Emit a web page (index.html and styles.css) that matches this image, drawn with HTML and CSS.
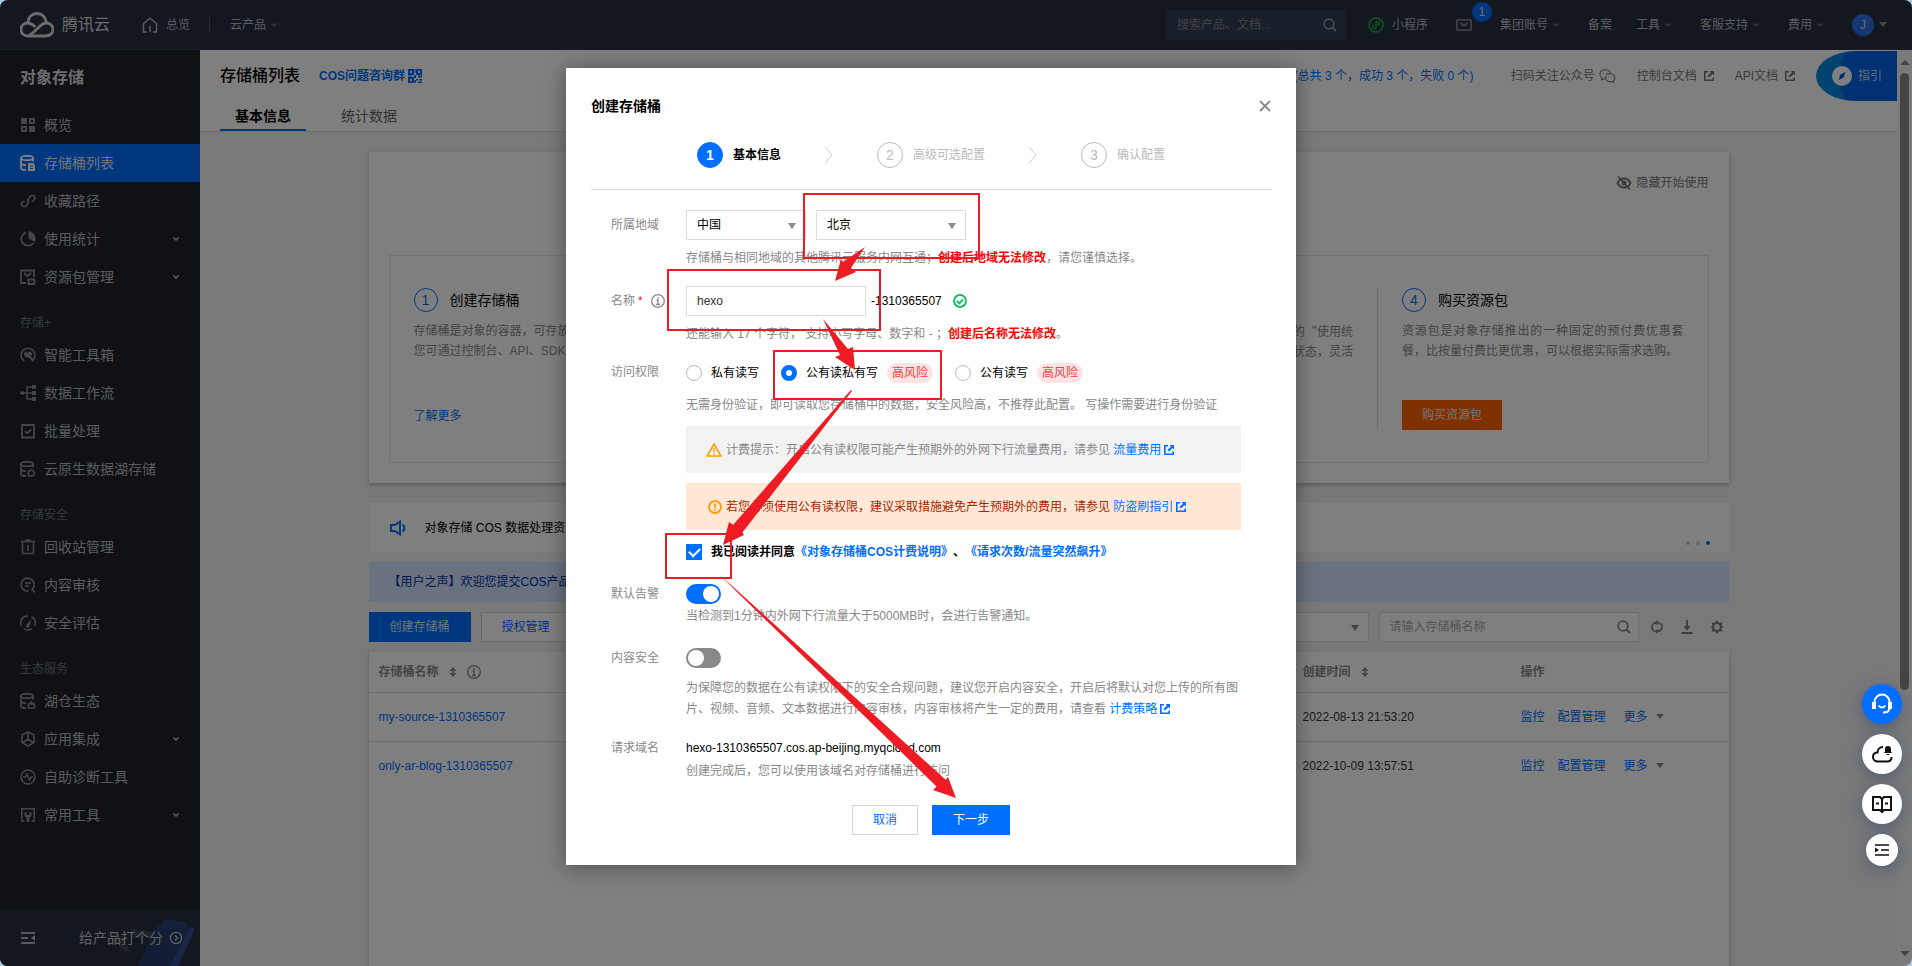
FILE: index.html
```html
<!DOCTYPE html>
<html lang="zh-CN">
<head>
<meta charset="utf-8">
<title>存储桶列表 - 对象存储</title>
<link rel="stylesheet" href="styles.css">
</head>
<body>
<svg width="0" height="0" class="defs" aria-hidden="true">
  <symbol id="chev" viewBox="0 0 8 8"><path d="M1.500 2.500l2.500 2.500 2.500-2.500" fill="none" stroke="currentColor" stroke-width="1.400"/></symbol>
  <symbol id="ext" viewBox="0 0 10 10"><path d="M4 .8H.8v8.400h8.400V6.500" fill="none" stroke="currentColor" stroke-width="1.600"/><path d="M5.500 0H10v4.500L8.500 3 5 6.500 3.500 5 7 1.500z" fill="currentColor"/></symbol>
  <symbol id="search" viewBox="0 0 14 14"><circle cx="6" cy="6" r="4.800" fill="none" stroke="currentColor" stroke-width="1.800"/><path d="M9.500 9.500l3.500 3.500" stroke="currentColor" stroke-width="2"/></symbol>
  <symbol id="info" viewBox="0 0 14 14"><circle cx="7" cy="7" r="6.300" fill="none" stroke="currentColor" stroke-width="1.300"/><path d="M7 3v1.600M5.500 6H7v4.500M5 10.500h4" fill="none" stroke="currentColor" stroke-width="1.400"/></symbol>
  <symbol id="sort" viewBox="0 0 8 12"><path d="M4 1l3.500 4H5v2h2.500L4 11 .5 7H3V5H.5z" fill="currentColor"/></symbol>
  <symbol id="db" viewBox="0 0 16 16"><g fill="none" stroke="currentColor" stroke-width="1.800"><ellipse cx="7" cy="3" rx="6" ry="2.200"/><path d="M1 3v10c0 1 2 2 5 2M1 8c0 1 2 2 5 2M13 3v3.500"/></g></symbol>
</svg>
<div class="app">
  <header class="top">
    <a class="logo" href="#">
      <svg width="34" height="26" viewBox="0 0 34 26"><path d="M8 24c-4 0-7-2.600-7-6.500S4 11 8 11c3 0 5 2 7.500 4M8 11C8 5 12 1.500 17 1.500S26 5 26 11c4 0 7 2.800 7 6.500S30 24 26 24H8c3-1 7-5 10-8s5-5 8-5" fill="none" stroke="currentColor" stroke-width="2.800"/></svg>
      <span>腾讯云</span>
    </a>
    <nav class="topleft">
      <a href="#" class="home"><svg width="16" height="16" viewBox="0 0 16 16"><path d="M5 15H1.500V6.500L8 1.200l6.500 5.300V15H11M8 9v6" fill="none" stroke="currentColor" stroke-width="1.500"/></svg>总览</a>
      <a href="#" class="products">云产品<svg width="8" height="8"><use href="#chev"/></svg></a>
    </nav>
    <div class="topright">
      <div class="navset">
        <div class="searchset">
          <label class="topsearch"><input type="text" placeholder="搜索产品、文档..." aria-label="搜索"><svg width="14" height="14"><use href="#search"/></svg></label>
          <a href="#" class="mini"><svg width="16" height="16" viewBox="0 0 16 16"><circle cx="8" cy="8" r="7" fill="none" stroke="#1aad40" stroke-width="1.600"/><path d="M9.500 8.500C12 8 11.500 4.500 9.500 4.500 8 4.500 8 5.500 8 7v2.500c0 1.500-.8 2-1.700 2-2 0-2.300-3-.3-3.700" fill="none" stroke="#1aad40" stroke-width="1.400"/></svg>小程序</a>
        </div>
        <a href="#" class="mail" aria-label="消息 1"><svg width="16" height="12" viewBox="0 0 16 12"><path d="M1 1h14v10H1zM4 3.500l4 3.500 4-3.500" fill="none" stroke="currentColor" stroke-width="1.600"/></svg><span class="badge">1</span></a>
        <a href="#">集团账号<svg width="8" height="8"><use href="#chev"/></svg></a>
        <a href="#">备案</a>
      </div>
      <div class="navset">
        <a href="#">工具<svg width="8" height="8"><use href="#chev"/></svg></a>
        <a href="#">客服支持<svg width="8" height="8"><use href="#chev"/></svg></a>
        <a href="#">费用<svg width="8" height="8"><use href="#chev"/></svg></a>
        <a href="#"><span class="avatar">J</span><i class="tri"></i></a>
      </div>
    </div>
  </header>
  <div class="body">
    <aside class="side">
      <h1>对象存储</h1>
      <nav class="menu">
        <a href="#"><svg width="16" height="16" viewBox="0 0 16 16"><path d="M1 1h6v6H1zM9 9h6v6H9z" fill="currentColor"/><path d="M10 2h4v4h-4zM2 10h4v4H2z" fill="none" stroke="currentColor" stroke-width="2"/></svg>概览</a>
        <a href="#" class="on"><svg width="16" height="16" viewBox="0 0 16 16"><use href="#db"/><path d="M8 8h5l2 2v6H8z" fill="currentColor"/><path d="M10 11h3M10 13.500h3" stroke="#006eff"/></svg>存储桶列表</a>
        <a href="#"><svg width="16" height="16" viewBox="0 0 16 16"><path d="M4.500 8.500H3L1 11l1.500 2.500H6l2-3V6.500l3-4h3L15.200 5 13 8h-1.500" fill="none" stroke="currentColor" stroke-width="1.700"/></svg>收藏路径</a>
        <a href="#"><svg width="16" height="16" viewBox="0 0 16 16"><path d="M6 1.400A6.800 6.800 0 1 0 13.500 12" fill="none" stroke="currentColor" stroke-width="1.700"/><path d="M8.500 0A8 8 0 0 1 15 11L8.500 7.500z" fill="currentColor"/></svg>使用统计<svg class="end" width="8" height="8"><use href="#chev"/></svg></a>
        <a href="#"><svg width="16" height="16" viewBox="0 0 16 16"><path d="M6 14H1V1.500h13V8M4 4l3.500 3L11 4" fill="none" stroke="currentColor" stroke-width="1.800"/><path d="M8.500 10.500h6V15h-6z" fill="none" stroke="currentColor" stroke-width="1.800"/></svg>资源包管理<svg class="end" width="8" height="8"><use href="#chev"/></svg></a>
        <h2>存储+</h2>
        <a href="#"><svg width="16" height="16" viewBox="0 0 16 16"><path d="M4 14a7 7 0 1 1 8 0" fill="none" stroke="currentColor" stroke-width="1.600"/><path d="M5 4l2.500 2L9 4.500c2 0 3.500 1.500 3 3.500l-1.500 1L14 13l-1.500 1.500-4-4c-3 .5-5-2-4.500-4z" fill="currentColor"/></svg>智能工具箱</a>
        <a href="#"><svg width="16" height="16" viewBox="0 0 16 16"><path d="M0 8h13M12 2H7v12h5" fill="none" stroke="currentColor" stroke-width="1.500"/><path d="M12 0h4v4h-4zM12 6h4v4h-4zM12 12h4v4h-4zM1 6.500h3v3H1z" fill="currentColor"/></svg>数据工作流</a>
        <a href="#"><svg width="16" height="16" viewBox="0 0 16 16"><path d="M2 2h12v12.500H2zM5 8l2.300 2.300L11.300 6.500" fill="none" stroke="currentColor" stroke-width="1.800"/></svg>批量处理</a>
        <a href="#"><svg width="16" height="16" viewBox="0 0 16 16"><use href="#db"/><path d="M9 9.500h4l1.500 2.500-1.500 3H9L8 12z" fill="none" stroke="currentColor" stroke-width="1.600"/></svg>云原生数据湖存储</a>
        <h2>存储安全</h2>
        <a href="#"><svg width="16" height="16" viewBox="0 0 16 16"><path d="M1 2.500h14M5.500 1h5M2.500 3v11.500h11V3M8 6v6" fill="none" stroke="currentColor" stroke-width="1.600"/></svg>回收站管理</a>
        <a href="#"><svg width="16" height="16" viewBox="0 0 16 16"><path d="M8.500 14A6.500 6.500 0 1 1 14 8c0 2-1 4-2 4.500l3 3M5 6h6M5 9h4" fill="none" stroke="currentColor" stroke-width="1.600"/></svg>内容审核</a>
        <a href="#"><svg width="16" height="16" viewBox="0 0 16 16"><path d="M1 10.500A7 7 0 0 1 8 1M11.500 1.800A7 7 0 0 1 15 10.500M4 13.500c2 2 6 2 8 0" fill="none" stroke="currentColor" stroke-width="1.700"/><path d="M11.500 4L9.500 11a1.800 1.800 0 1 1-3-1.500z" fill="currentColor"/></svg>安全评估</a>
        <h2>生态服务</h2>
        <a href="#"><svg width="16" height="16" viewBox="0 0 16 16"><use href="#db"/><path d="M8.500 11h6v4h-6zM9.500 11l2-2 2 2" fill="none" stroke="currentColor" stroke-width="1.600"/></svg>湖仓生态</a>
        <a href="#"><svg width="16" height="16" viewBox="0 0 16 16"><path d="M8 1l6 3v7.500L8 15l-6-3.500V4zM8 2v6M8 8l-5 3.500M8 8l5 3.500" fill="none" stroke="currentColor" stroke-width="1.600"/></svg>应用集成<svg class="end" width="8" height="8"><use href="#chev"/></svg></a>
        <a href="#"><svg width="16" height="16" viewBox="0 0 16 16"><circle cx="8" cy="8" r="7" fill="none" stroke="currentColor" stroke-width="1.600"/><path d="M3 8h2.500L7 5l2.500 6L11 8h2" fill="none" stroke="currentColor" stroke-width="1.500"/></svg>自助诊断工具</a>
        <a href="#"><svg width="16" height="16" viewBox="0 0 16 16"><path d="M4.500 14.200H1.800V1.800h12.400v12.400h-2.700" fill="none" stroke="currentColor" stroke-width="1.600"/><path d="M4.500 5v4l2 1.500V15h3v-4.500l2-1.500V5h-2v3h-3V5z" fill="currentColor"/></svg>常用工具<svg class="end" width="8" height="8"><use href="#chev"/></svg></a>
      </nav>
      <div class="sidefoot">
        <svg class="art" width="110" height="56" viewBox="0 0 110 56"><path d="M16 20q6 2 5 8l14 14 6 1-6-12-8-8zM38 22l4-3 26 3v4l-22 2z" fill="#3c4250"/><path d="M66 14l34 4-20 38H48z" fill="#263a68"/><path d="M100 17l5 2-17 37h-8z" fill="#304e90"/><path d="M74 9l21 3 4 7-27 1z" fill="#2b4274"/></svg>
        <button class="fold" aria-label="收起菜单"><svg width="14" height="12" viewBox="0 0 14 12"><path d="M0 1h14M0 6h7M0 11h14" stroke="currentColor" stroke-width="2"/><path d="M14 3v6l-4-3z" fill="currentColor"/></svg></button>
        <a href="#">给产品打个分<svg width="14" height="14" viewBox="0 0 14 14"><circle cx="7" cy="7" r="5.600" fill="none" stroke="currentColor" stroke-width="1.300"/><path d="M6 4.500L8.500 7 6 9.500" fill="none" stroke="currentColor" stroke-width="1.300"/></svg></a>
      </div>
    </aside>
    <main class="main">
      <div class="pagehead">
        <div class="titlerow">
          <h2>存储桶列表</h2>
          <a href="#" class="qr">COS问题咨询群<svg width="14" height="14" viewBox="0 0 14 14"><path d="M1 1h4v4H1zM9 1h4v4H9zM1 9h4v4H1z" fill="none" stroke="currentColor" stroke-width="2"/><path d="M6.500 0h1v4h-1zM6 6h2v3H6zM0 6.500h4v1H0zM10 6.500h4v2h-4zM8 10h2v1.500H8zM6.500 11h1.500v3H6.500zM11 10h3v1.500h-3zM10 12.500h4V14h-4z" fill="currentColor"/></svg></a>
          <div class="headlinks">
            <a href="#" class="sum">(总共 3 个，成功 3 个，失败 0 个)</a>
            <a href="#">扫码关注公众号<svg width="17" height="14" viewBox="0 0 17 14"><g fill="none" stroke="currentColor" stroke-width="1.100"><path d="M6 9.500l-3.500 1.300.5-2C-1 5.500 1.500.8 6 .8S11.500 3.500 11 4.800"/><path d="M11.200 4.800c-3 0-4.700 2-4.700 4s2 4 4.700 4l1.300-.3 2 1v-1.700c3-2.500 1-7-3.300-7z"/></g><path d="M4 4h1v1H4zM7.500 4h1v1h-1zM9 7.500h1v1H9zM12.500 7.500h1v1h-1z" fill="currentColor"/></svg></a>
            <a href="#" class="doc">控制台文档<svg width="10" height="10"><use href="#ext"/></svg></a>
            <a href="#" class="doc">API文档<svg width="10" height="10"><use href="#ext"/></svg></a>
          </div>
        </div>
        <button class="guide"><svg width="20" height="20" viewBox="0 0 20 20"><circle cx="10" cy="10" r="10" fill="#fff"/><path d="M13.500 6l-2 5.500L6.500 14l2-5.500z" fill="#0052d9"/></svg>指引</button>
        <nav class="tabs"><a href="#" class="on">基本信息</a><a href="#">统计数据</a></nav>
      </div>
      <div class="content">
        <section class="card start">
          <a href="#" class="hide"><svg width="16" height="16" viewBox="0 0 16 16"><path d="M1.500 8C3 5 5.500 3.500 8 3.500S13 5 14.500 8C13 11 10.500 12.500 8 12.500S3 11 1.500 8z" fill="none" stroke="currentColor" stroke-width="2"/><circle cx="8" cy="8" r="2.400" fill="currentColor"/><path d="M2 1.500l12 13" stroke="currentColor" stroke-width="1.700"/></svg>隐藏开始使用</a>
          <div class="steps4">
            <div class="s4"><h3><b>1</b>创建存储桶</h3><p>存储桶是对象的容器，可存放任意数量的对象，<br>您可通过控制台、API、SDK 等方式创建存储桶。</p><a href="#">了解更多</a></div>
            <div class="s4"></div>
            <div class="s4 third"><p>您可以通过控制台的“使用统<br>计”查看数据与运行状态，灵活</p></div>
            <div class="s4"><h3><b>4</b>购买资源包</h3><p>资源包是对象存储推出的一种固定的预付费优惠套餐，比按量付费比更优惠，可以根据实际需求选购。</p><button class="buy">购买资源包</button></div>
          </div>
        </section>
        <section class="notice">
          <svg width="17" height="16" viewBox="0 0 17 16"><path d="M1 5h4l5-3.500v13L5 11H1z" fill="none" stroke="#006eff" stroke-width="1.900"/><path d="M12.500 4.500c2.500 1.500 2.500 5.500 0 7" fill="none" stroke="#006eff" stroke-width="2"/></svg>
          <span>对象存储 COS 数据处理资源包上线</span>
          <span class="dots"><i></i><i></i><i class="on"></i></span>
        </section>
        <section class="voice">【用户之声】欢迎您提交COS产品建议</section>
        <div class="bar">
          <button class="btn primary">创建存储桶</button>
          <button class="btn">授权管理</button>
          <span class="pick far"><select aria-label="筛选"><option></option></select></span>
          <label class="find"><input type="text" placeholder="请输入存储桶名称" aria-label="存储桶名称"><svg width="14" height="14"><use href="#search"/></svg></label>
          <div class="tools">
            <button aria-label="刷新"><svg width="14" height="14" viewBox="0 0 14 14"><path d="M4.600 11.400C1.500 9.800 1 5.500 3.600 3.600 4.500 2.900 5.500 2.600 7 2.600M9.400 2.600C12.500 4.200 13 8.500 10.400 10.400 9.500 11.100 8.500 11.400 7 11.400" fill="none" stroke="currentColor" stroke-width="1.600"/><path d="M6.500 0v5.200l3-2.600zM7.500 8.800V14l-3-2.600z" fill="currentColor"/></svg></button>
            <button aria-label="下载"><svg width="14" height="14" viewBox="0 0 14 14"><path d="M7 0v8M1.500 13h11" stroke="currentColor" stroke-width="1.900"/><path d="M3.500 6h7L7 10.500z" fill="currentColor"/></svg></button>
            <button aria-label="设置"><svg width="14" height="14" viewBox="0 0 14 14"><path d="M7 0l1.900 2.800 3.600-.3-1.200 3.300L13.500 7l-2.200 1.200 1.200 3.300-3.600-.3L7 14l-1.900-2.800-3.600.3 1.200-3.300L.5 7l2.200-1.200-1.200-3.300 3.600.3z" fill="currentColor"/><circle cx="7" cy="7" r="2.900" fill="#f2f2f2"/></svg></button>
          </div>
        </div>
        <div class="card tablecard">
          <table>
            <colgroup><col class="c1"><col class="c2"><col class="c3"></colgroup>
            <thead><tr><th><span>存储桶名称<svg width="8" height="12"><use href="#sort"/></svg><svg width="14" height="14"><use href="#info"/></svg></span></th><th><span>创建时间<svg width="8" height="12"><use href="#sort"/></svg></span></th><th>操作</th></tr></thead>
            <tbody>
              <tr><td><a href="#">my-source-1310365507</a></td><td>2022-08-13 21:53:20</td><td><div class="ops"><a href="#">监控</a><a href="#">配置管理</a><a href="#" class="more">更多<i class="tri"></i></a></div></td></tr>
              <tr><td><a href="#">only-ar-blog-1310365507</a></td><td>2022-10-09 13:57:51</td><td><div class="ops"><a href="#">监控</a><a href="#">配置管理</a><a href="#" class="more">更多<i class="tri"></i></a></div></td></tr>
            </tbody>
          </table>
        </div>
      </div>
    </main>
    <div class="scroll"><i class="up"></i><i class="thumb"></i><i class="down"></i></div>
  </div>

  <div class="mask">
    <form class="modal" role="dialog" aria-label="创建存储桶">
      <div class="mtitle"><h2>创建存储桶</h2><button type="button" aria-label="关闭"><svg width="12" height="12" viewBox="0 0 12 12"><path d="M1 1l10 10M11 1L1 11" stroke="#888" stroke-width="1.800"/></svg></button></div>
      <ol class="steps">
        <li class="on"><b>1</b>基本信息</li>
        <li class="arr"><svg width="10" height="16" viewBox="0 0 10 16"><path d="M1 0l7 8-7 8" fill="none" stroke="#ccc"/></svg></li>
        <li><b>2</b>高级可选配置</li>
        <li class="arr"><svg width="10" height="16" viewBox="0 0 10 16"><path d="M1 0l7 8-7 8" fill="none" stroke="#ccc"/></svg></li>
        <li><b>3</b>确认配置</li>
      </ol>
      <div class="fields">
        <div class="row">
          <label for="area">所属地域</label>
          <div>
            <div class="line selects"><span class="pick country"><select id="area"><option>中国</option></select></span><span class="pick city"><select aria-label="城市"><option>北京</option></select></span></div>
            <p class="help">存储桶与相同地域的其他腾讯云服务内网互通；<strong>创建后地域无法修改</strong>，请您谨慎选择。</p>
          </div>
        </div>
        <div class="row">
          <label for="bname">名称<em>*</em><svg width="14" height="14"><use href="#info"/></svg></label>
          <div>
            <div class="line"><input id="bname" class="text" type="text" value="hexo"><span class="suffix">-1310365507</span><svg width="14" height="14" viewBox="0 0 14 14"><circle cx="7" cy="7" r="6" fill="none" stroke="#0abf5b" stroke-width="1.800"/><path d="M4 7l2.300 2.300L10 5.500" fill="none" stroke="#0abf5b" stroke-width="1.900"/></svg></div>
            <p class="help">还能输入 17 个字符， 支持小写字母、数字和 - ；<strong>创建后名称无法修改</strong>。</p>
          </div>
        </div>
        <div class="row short">
          <span class="lab">访问权限</span>
          <div>
            <div class="line radios">
              <label><input type="radio" name="acl"><span>私有读写</span></label>
              <label><input type="radio" name="acl" checked><span>公有读私有写</span><i class="tag">高风险</i></label>
              <label><input type="radio" name="acl"><span>公有读写</span><i class="tag">高风险</i></label>
            </div>
            <p class="help acl">无需身份验证，即可读取您存储桶中的数据，安全风险高，不推荐此配置。 写操作需要进行身份验证</p>
            <div class="alert"><svg width="16" height="14" viewBox="0 0 16 14"><path d="M8 1l7 12H1z" fill="none" stroke="#ff9d00" stroke-width="1.500"/><path d="M8 5v4M8 10v1.500" stroke="#ff9d00" stroke-width="1.500"/></svg><span>计费提示：开启公有读权限可能产生预期外的外网下行流量费用，请参见 <a href="#">流量费用<svg width="10" height="10"><use href="#ext"/></svg></a></span></div>
            <div class="alert warn"><svg width="16" height="14" viewBox="0 0 16 14"><circle cx="9" cy="7" r="6" fill="none" stroke="#ff9d00" stroke-width="1.800"/><path d="M9 3.500v4.500M9 9v1.600" stroke="#ff9d00" stroke-width="1.800"/></svg><span>若您必须使用公有读权限，建议采取措施避免产生预期外的费用，请参见 <a href="#">防盗刷指引<svg width="10" height="10"><use href="#ext"/></svg></a></span></div>
            <label class="agree"><input type="checkbox" checked><span>我已阅读并同意<a href="#">《对象存储桶COS计费说明》</a>、<a href="#">《请求次数/流量突然飙升》</a></span></label>
          </div>
        </div>
        <div class="row short">
          <label for="alarm">默认告警</label>
          <div><div class="line"><input id="alarm" class="switch" type="checkbox" checked></div>
          <p class="help tight">当检测到1分钟内外网下行流量大于5000MB时，会进行告警通知。</p></div>
        </div>
        <div class="row short">
          <label for="safe">内容安全</label>
          <div><div class="line"><input id="safe" class="switch" type="checkbox"></div>
          <p class="help para">为保障您的数据在公有读权限下的安全合规问题，建议您开启内容安全，开启后将默认对您上传的所有图片、视频、音频、文本数据进行内容审核，内容审核将产生一定的费用，请查看 <a href="#">计费策略<svg width="10" height="10"><use href="#ext"/></svg></a></p></div>
        </div>
        <div class="row short last">
          <span class="lab">请求域名</span>
          <div><div class="line">hexo-1310365507.cos.ap-beijing.myqcloud.com</div>
          <p class="help domain">创建完成后，您可以使用该域名对存储桶进行访问</p></div>
        </div>
      </div>
      <div class="actions"><button type="button" class="btn">取消</button><button type="button" class="btn primary">下一步</button></div>
      <svg class="marks" viewBox="566 68 730 797" aria-hidden="true">
        <g fill="none" stroke="#ed1c24" stroke-width="2"><path d="M804 194h175v64H804zM668 270h212v60H668zM774 351h167v48H774zM666 534h65v44h-65z"/></g>
        <g fill="#ed1c24"><path d="M835 281l6-22 2 3 22-15-14 21 5 4z"/><path d="M823 319L848 349 853 347 855 370 835 357 840 355z"/><path d="M851 390L741 530l3 5-21 10 6-23 6 4z"/><path d="M851 390l1 1L742 533l-9-8z"/><path d="M718 574l225 209 5-6 8 21-23-8 5-5z"/><path d="M719 574l228 207-10 6z"/></g>
      </svg>
    </form>
  </div>

  <div class="float">
    <button class="hot" aria-label="客服"><svg width="22" height="22" viewBox="0 0 22 22"><path d="M3.500 15V9a7.500 7.500 0 0 1 15 0v6c0 3-2 4.500-6.500 4.500" fill="none" stroke="#fff" stroke-width="2"/><path d="M1 9h4v7H1zM17 9h4v7h-4z" fill="#fff"/><path d="M7.500 12.500c2 2.500 5 2.500 7 0" fill="none" stroke="#fff" stroke-width="2"/></svg></button>
    <button aria-label="通知"><svg width="22" height="22" viewBox="0 0 22 22"><path d="M12 4C8.500 4 6.500 6.500 6.500 9.500 3.500 9.500 2 11.500 2 14s2 4.500 5 4.500h9c3 0 4.500-2 4.500-4.500" fill="none" stroke="#111" stroke-width="2"/><path d="M14 9V6a3 3 0 0 1 6 0v3l1.500 1h-9zM15.500 11h3v1h-3z" fill="#111"/></svg></button>
    <button aria-label="文档"><svg width="22" height="22" viewBox="0 0 22 22"><path d="M2 4h7l2 2 2-2h7v13h-7l-2 2-2-2H2zM11 6v12M5 10.500h3M14 10.500h3" fill="none" stroke="#111" stroke-width="2"/></svg></button>
    <button class="small" aria-label="收起"><svg width="14" height="12" viewBox="0 0 14 12"><path d="M0 1h14M6 6h8M0 11h14" stroke="#111" stroke-width="1.500"/><path d="M0 3.500v5L4 6z" fill="#111"/></svg></button>
  </div>
</div>
</body>
</html>
```
FILE: styles.css
```css
* { box-sizing: border-box; margin: 0; padding: 0; }
html { background: #a4cbe2; }
body { font: 12px/20px "Liberation Sans", "Noto Sans CJK SC", sans-serif; color: #000; text-spacing-trim: space-all; }
a { color: #006eff; text-decoration: none; }
button, input, select { font: inherit; color: inherit; border: 0; background: none; border-radius: 0; outline: 0; }
svg { flex: none; }
ol { list-style: none; }
i, em { font-style: normal; }
.defs { position: absolute; }
.app { position: relative; height: 100vh; display: flex; flex-direction: column; overflow: hidden; border-radius: 8px; background: #f2f2f2; }

.top { height: 50px; flex: none; display: flex; align-items: center; background: #262f3e; border-bottom: 1px solid #343e4e; padding: 0 25px 0 20px; color: #b4b8be; }
.top a { color: inherit; display: flex; align-items: center; white-space: nowrap; }
.top a > svg[width="8"] { margin-left: 4px; color: #6f7783; }
.top .logo { gap: 8px; font-size: 16px; color: #d5d8dc; }
.topleft { display: flex; align-items: center; margin-left: 32px; }
.top .home { gap: 8px; padding-right: 19px; border-right: 1px solid #4a5260; line-height: 16px; }
.products { padding-left: 20px; }
.topright { margin-left: auto; display: flex; gap: 24px; align-items: center; }
.navset { display: flex; gap: 28px; align-items: center; }
.searchset { display: flex; gap: 22px; align-items: center; }
.topsearch { width: 180px; height: 30px; background: #333e52; display: flex; align-items: center; padding: 0 9px 0 11px; color: #8d939c; }
.topsearch input { flex: 1; min-width: 0; }
.topsearch input::placeholder { color: #7d838d; }
.mini { gap: 8px; }
.top .mail { position: relative; color: #858b94; }
.badge { position: absolute; left: 16px; top: -17px; width: 20px; height: 20px; border-radius: 10px; background: #006eff; color: #d8dde5; text-align: center; }
.avatar { width: 22px; height: 22px; line-height: 22px; border-radius: 11px; background: #2f6fe8; text-align: center; color: #d5d8dc; margin-right: 5px; }
.tri { display: inline-block; border: 4px solid transparent; border-top: 5px solid #888; border-bottom: 0; }

.body { flex: 1; min-height: 0; display: flex; }
.side { width: 200px; flex: none; background: #1f2229; display: flex; flex-direction: column; color: #c2c5c9; }
.side h1 { font-size: 16px; line-height: 24px; padding: 16px 20px; color: #d8dadc; }
.menu { flex: 1; min-height: 0; overflow: hidden; }
.menu a { height: 38px; display: flex; align-items: center; gap: 8px; padding: 0 20px; font-size: 14px; color: #b4b7bc; }
.menu a svg { color: #878a90; }
.menu a.on { background: #006eff; color: #e0e8f5; }
.menu a.on svg { color: #fff; }
.menu a svg.end { margin-left: auto; color: #c2c5c9; }
.menu h2 { height: 40px; padding: 17px 20px 0; font-size: 12px; font-weight: 400; color: #6c7078; }
.sidefoot { position: relative; height: 56px; flex: none; background: #262f3e; display: flex; align-items: center; justify-content: space-between; padding: 0 17px 0 21px; color: #a8b4c4; }
.art { position: absolute; right: 0; bottom: 0; }
.fold { display: flex; }
.sidefoot a { position: relative; display: flex; align-items: center; gap: 6px; font-size: 14px; color: #c2c5c9; }

.main { flex: 1; min-width: 0; overflow: hidden; }
.pagehead { position: relative; background: #fff; border-bottom: 1px solid #ddd; height: 82px; display: flex; flex-direction: column; justify-content: space-between; }
.titlerow { display: flex; align-items: center; padding: 14px 102px 0 20px; }
.titlerow h2 { font-size: 16px; line-height: 24px; font-weight: 500; }
.qr { font-weight: 700; margin-left: 19px; display: flex; align-items: center; gap: 3px; }
.headlinks { margin-left: auto; display: flex; align-items: center; gap: 21px; }
.headlinks a { display: flex; align-items: center; gap: 4px; color: #777; white-space: nowrap; }
.headlinks a.sum { color: #006eff; margin-right: 16px; }
.headlinks a.doc { gap: 7px; }
.guide { position: absolute; right: 0; top: 1px; width: 81px; height: 50px; overflow: hidden; border-radius: 40px 0 0 40px / 25px 0 0 25px; background: radial-gradient(circle at 76px 25px, #0062e6 52px, #0085e0 53px); color: #c8dcf8; display: flex; align-items: center; gap: 6px; padding-left: 16px; }
.tabs { display: flex; padding-left: 20px; gap: 20px; font-size: 14px; }
.tabs a { padding: 0 15px 1px; color: #666; line-height: 24px; border-bottom: 2px solid transparent; }
.tabs a.on { color: #000; font-weight: 700; border-color: #006eff; }

.content { max-width: 1360px; margin: 20px auto 0; }
.card { background: #fff; box-shadow: 0 2px 4px rgba(0,0,0,.25); }
.start { padding: 21px 20px 20px; }
.hide { display: flex; justify-content: flex-end; align-items: center; gap: 4px; color: #777; margin-bottom: 62px; }
.steps4 { border: 1px solid #e5e5e5; display: grid; grid-template-columns: repeat(4, 1fr); padding: 32px 0; }
.s4 { height: 142px; padding: 0 24px; border-right: 1px solid #ddd; display: flex; flex-direction: column; align-items: flex-start; }
.s4:last-child { border: 0; }
.s4 h3 { display: flex; align-items: center; gap: 12px; font-size: 14px; font-weight: 400; line-height: 24px; }
.s4 h3 b { width: 24px; height: 24px; border: 1px solid #006eff; border-radius: 12px; font-weight: 400; color: #006eff; text-align: center; line-height: 22px; }
.s4 p { color: #888; margin-top: 9px; text-align: justify; }
.s4 > a { margin-top: auto; margin-bottom: 4px; }
.s4.third p { margin: 33px 0 0 auto; text-align: right; white-space: nowrap; font-family: "Noto Sans CJK SC", sans-serif; }
.buy { margin-top: auto; background: #ff6200; color: #e8e8e8; width: 100px; height: 30px; }
.notice { margin-top: 20px; height: 49px; background: #fff; display: flex; align-items: center; gap: 18px; padding: 0 19px 0 21px; }
.dots { margin-left: auto; align-self: flex-end; display: flex; gap: 6px; padding-bottom: 7px; }
.dots i { width: 4px; height: 4px; border-radius: 2px; background: #ccc; }
.dots i.on { background: #006eff; }
.voice { margin-top: 10px; height: 40px; line-height: 40px; background: #d5e5ff; color: #002da0; padding: 0 20px; }
.bar { display: flex; gap: 10px; margin: 10px 0; height: 30px; }
.btn { height: 30px; padding: 0 20px; border: 1px solid #cfd5de; background: #fff; color: #006eff; }
.btn.primary { background: #006eff; border-color: #006eff; color: #fff; }
.bar .btn.primary { color: #dbe8fa; }
.pick { position: relative; display: block; height: 30px; border: 1px solid #ddd; background: #fff; }
.pick select { appearance: none; width: 100%; height: 28px; padding: 0 10px; display: block; }
.pick::after { content: ""; position: absolute; right: 9px; top: 12px; border: 4px solid transparent; border-top: 6px solid #888; border-bottom: 0; }
.far { width: 200px; margin-left: auto; }
.find { width: 260px; border: 1px solid #ddd; background: #fff; display: flex; align-items: center; padding: 0 7px 0 10px; color: #888; }
.find input { flex: 1; min-width: 0; }
.find input::placeholder { color: #aaa; }
.tools { display: flex; gap: 16px; padding: 0 5px 0 1px; color: #777; }
.tools button { display: flex; align-items: center; }
.tablecard { height: 420px; }
table { width: 100%; table-layout: fixed; border-collapse: collapse; }
.c1 { width: 924px; } .c2 { width: 218px; }
th, td { text-align: left; padding: 0 10px; border-bottom: 1px solid #ddd; height: 49px; color: #333; }
th { height: 40px; color: #888; font-weight: 700; }
tbody tr:last-child td { border: 0; }
th span { display: flex; align-items: center; gap: 10px; color: #888; }
.ops { display: flex; gap: 13px; }
.more { margin-left: 5px; display: flex; align-items: center; gap: 8px; }

.scroll { width: 15px; flex: none; background: #f6f6f6; display: flex; flex-direction: column; align-items: center; padding: 10px 0; }
.up { border: 5px solid transparent; border-top: 0; border-bottom: 5px solid #888; }
.thumb { width: 9px; height: 617px; border-radius: 5px; background: #888; margin-top: 8px; }
.down { margin-top: auto; border: 5px solid transparent; border-bottom: 0; border-top: 5px solid #888; }

.mask { position: absolute; inset: 0; background: rgba(0,0,0,.5); display: flex; justify-content: center; align-items: flex-start; padding: 68px 50px 0 0; }
.modal { position: relative; width: 730px; background: #fff; padding: 26px 25px 30px; box-shadow: 0 2px 20px rgba(0,0,0,.4); }
.marks { position: absolute; left: 0; top: 0; width: 100%; pointer-events: none; }
.mtitle { display: flex; justify-content: space-between; align-items: center; line-height: 24px; }
.mtitle h2 { font-size: 14px; }
.mtitle button { display: flex; }
.steps { display: flex; justify-content: center; align-items: center; gap: 43px; height: 72px; border-bottom: 1px solid #ddd; color: #bbb; padding-top: 3px; }
.steps li { display: flex; align-items: center; gap: 10px; }
.steps b { width: 26px; height: 26px; line-height: 24px; border: 1px solid #bbb; border-radius: 13px; font-size: 14px; font-weight: 400; text-align: center; }
.steps li.on { color: #000; font-weight: 700; }
.steps li.on b { background: #006eff; border-color: #006eff; color: #fff; font-weight: 700; }
.fields { padding: 20px 30px 0 20px; display: flex; flex-direction: column; gap: 18px; }
.row { display: grid; grid-template-columns: 75px minmax(0, 1fr); }
.row > label, .lab { color: #888; line-height: 30px; display: flex; align-items: center; align-self: start; }
.row > label { height: 30px; }
.row.short > label, .row.short > .lab { line-height: 20px; height: 20px; }
.row em { color: #e1251b; margin: 0 8px 0 3px; }
.line { display: flex; align-items: center; min-height: 20px; }
.selects { gap: 10px; }
.country { width: 120px; }
.city { width: 150px; }
.text { width: 180px; height: 30px; border: 1px solid #ddd; padding: 0 10px; color: #333; }
.suffix { margin: 0 11px 0 5px; }
.help { color: #888; margin-top: 8px; }
.help strong { color: #f00; }
.line.radios { gap: 22px; min-height: 22px; }
.radios label { display: flex; align-items: center; gap: 9px; }
.radios input { appearance: none; width: 16px; height: 16px; border: 1px solid #bbb; border-radius: 8px; }
.radios input:checked { border: 5px solid #006eff; }
.tag { background: #fce4e5; color: #e54545; border-radius: 10px; padding: 0 5px; }
.help.acl { margin-top: 11px; }
.alert { background: #f2f2f2; color: #888; height: 47px; display: flex; align-items: center; gap: 4px; padding: 0 20px; margin-top: 11px; }
.alert.warn { background: #ffe8d5; color: #a52700; margin-top: 10px; }
.alert a svg, .para a svg { margin-left: 3px; vertical-align: -1px; }
.agree { display: flex; align-items: center; gap: 9px; font-weight: 700; margin-top: 12px; }
.agree input { appearance: none; width: 16px; height: 16px; background: #006eff; display: flex; align-items: center; justify-content: center; }
.agree input::before { content: ""; width: 9px; height: 5px; border: 2px solid #fff; border-top: 0; border-right: 0; transform: rotate(-45deg) translate(1px, -1px); }
.row.short + .row.short { margin-top: 4px; }
.row.short + .row.last { margin-top: 0; }
.switch { appearance: none; width: 35px; height: 20px; border-radius: 10px; background: #888; padding: 2px; display: flex; }
.switch::before { content: ""; width: 16px; height: 16px; border-radius: 8px; background: #fff; }
.switch:checked { background: #006eff; justify-content: flex-end; }
.help.tight { margin-top: 2px; }
.help.para { margin-top: 10px; line-height: 21px; }
.help.domain { margin-top: 3px; }
.actions { display: flex; justify-content: center; gap: 14px; margin-top: 24px; }
.actions .btn { min-width: 66px; }
.actions .primary { min-width: 78px; }

.float { position: absolute; right: 10px; top: 684px; display: flex; flex-direction: column; align-items: center; gap: 10px; }
.float button { width: 40px; height: 40px; border-radius: 20px; background: #fff; display: flex; align-items: center; justify-content: center; box-shadow: 0 4px 16px rgba(55,75,110,.6); }
.float .hot { background: #006eff; }
.float .small { width: 32px; height: 32px; border-radius: 16px; }
```
